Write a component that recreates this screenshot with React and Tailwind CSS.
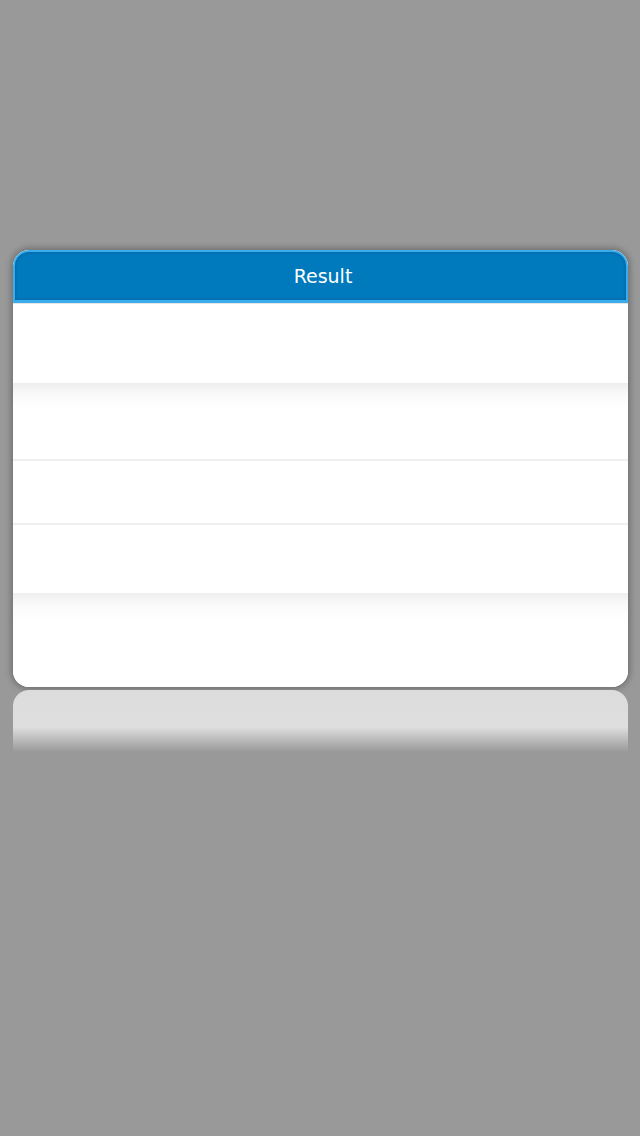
import React from "react";

function App() {
  return (
    <div className="min-h-[1136px] w-[640px] bg-[#999999] flex flex-col items-center pt-[250px] font-['DejaVu_Sans',sans-serif]">
      <div className="w-[615px] ml-[1px] rounded-[16px] bg-white shadow-[0_0_6px_2px_rgba(0,0,0,0.28)] overflow-hidden">
        <div className="h-[53px] rounded-t-[16px] bg-[#0079bd] border-[2px] border-b-[3px] border-[#3aaeec] flex items-center justify-center shadow-[inset_0_0_3px_rgba(0,60,110,0.5)]">
          <span className="text-white text-[19px] mt-[1px] ml-[5px]">Result</span>
        </div>
        <div className="h-[80px] bg-white border-t border-[#e4e4e4]" />
        <div className="h-[76px] bg-[linear-gradient(to_bottom,#eeeeee_0px,#fafafa_12px,#ffffff_26px)]" />
        <div className="h-[2px] bg-[#efefef]" />
        <div className="h-[62px] bg-white" />
        <div className="h-[2px] bg-[#efefef]" />
        <div className="h-[68px] bg-white" />
        <div className="h-[94px] bg-[linear-gradient(to_bottom,#eeeeee_0px,#fafafa_12px,#ffffff_28px)]" />
      </div>
      <div className="w-[615px] ml-[1px] mt-[3px] h-[62px] rounded-t-[16px] bg-gradient-to-b from-[#dcdcdc] via-[#dedede] via-60% to-[#999999]" />
    </div>
  );
}

export default App;
